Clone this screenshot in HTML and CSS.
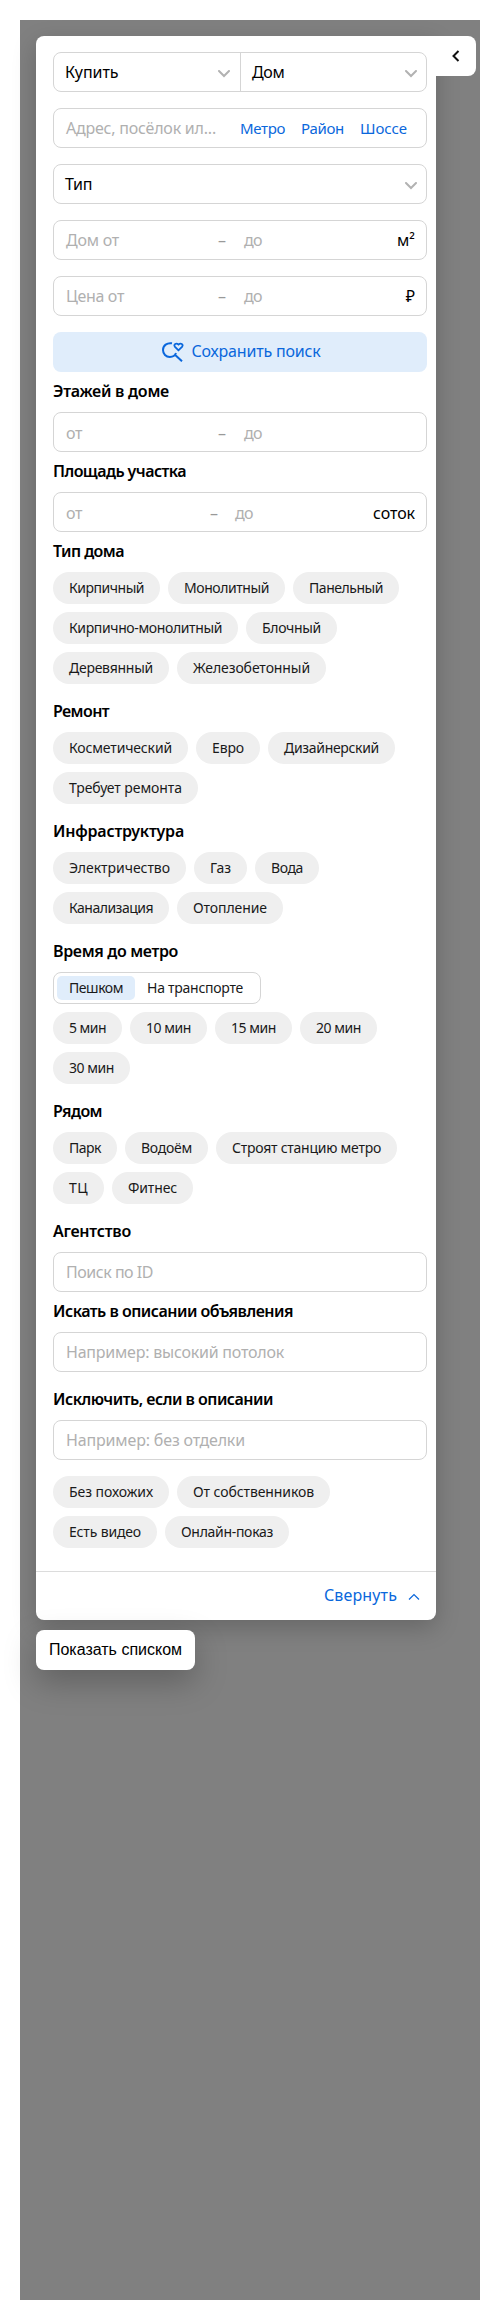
FILE: index.html
```html
<!DOCTYPE html>
<html lang="ru">
<head>
<meta charset="utf-8">
<title>Фильтры</title>
<link rel="stylesheet" href="styles.css">
</head>
<body>
<main class="map">
  <section class="panel">
    <button class="collapse" aria-label="Скрыть"><svg width="8" height="12" viewBox="0 0 8 12"><path d="M6.5 1 L1.5 6 L6.5 11"/></svg></button>
    <div class="filters">
      <div class="field split">
        <div class="select"><span data-w="53.5">Купить</span><svg class="chev" viewBox="0 0 12 8"><path d="M1 1 L6 6 L11 1"/></svg></div>
        <div class="select"><span data-w="32.5">Дом</span><svg class="chev" viewBox="0 0 12 8"><path d="M1 1 L6 6 L11 1"/></svg></div>
      </div>
      <div class="field address">
        <span class="hint" data-w="150">Адрес, посёлок ил...</span>
        <nav class="links"><a data-w="45">Метро</a><a data-w="43">Район</a><a data-w="47">Шоссе</a></nav>
      </div>
      <div class="field select"><span data-w="27">Тип</span><svg class="chev" viewBox="0 0 12 8"><path d="M1 1 L6 6 L11 1"/></svg></div>
      <div class="field range"><span class="hint from" data-w="53">Дом от</span><span class="dash">–</span><span class="hint" data-w="18">до</span><span class="unit" data-w="18">м²</span></div>
      <div class="field range"><span class="hint from" data-w="58">Цена от</span><span class="dash">–</span><span class="hint" data-w="18">до</span><span class="unit">₽</span></div>
      <button class="save"><svg width="22" height="20" viewBox="0 0 22 20"><path d="M10 1.300C5 .400 1 3.600 1 8c0 4 3 6.900 6.800 6.900 3.200 0 5.300-1.500 6.200-3.900M13.200 13.100l6.800 6.200"/><path class="heart" d="M16.500 8.300l-3.700-3.700c-1.300-2 1.200-4.100 3.700-2.100 2.500-2 5 .1 3.700 2.100z"/></svg><span data-w="129">Сохранить поиск</span></button>

      <h3><span data-w="116">Этажей в доме</span></h3>
      <div class="field range low"><span class="hint from" data-w="16">от</span><span class="dash">–</span><span class="hint" data-w="18">до</span></div>
      <h3><span data-w="133">Площадь участка</span></h3>
      <div class="field range low narrow"><span class="hint from" data-w="16">от</span><span class="dash">–</span><span class="hint" data-w="18">до</span><span class="unit" data-w="42">соток</span></div>

      <h3><span data-w="71">Тип дома</span></h3>
      <div class="chips">
        <span class="chip" data-w="75">Кирпичный</span><span class="chip" data-w="85">Монолитный</span><span class="chip" data-w="74">Панельный</span>
        <span class="chip" data-w="153">Кирпично-монолитный</span><span class="chip" data-w="59">Блочный</span>
        <span class="chip" data-w="84">Деревянный</span><span class="chip" data-w="117">Железобетонный</span>
      </div>
      <h3 class="apart"><span data-w="56">Ремонт</span></h3>
      <div class="chips">
        <span class="chip" data-w="103">Косметический</span><span class="chip" data-w="32">Евро</span><span class="chip" data-w="95">Дизайнерский</span>
        <span class="chip" data-w="113">Требует ремонта</span>
      </div>
      <h3 class="apart"><span data-w="131">Инфраструктура</span></h3>
      <div class="chips">
        <span class="chip" data-w="101">Электричество</span><span class="chip" data-w="21">Газ</span><span class="chip" data-w="32">Вода</span>
        <span class="chip" data-w="84">Канализация</span><span class="chip" data-w="74">Отопление</span>
      </div>
      <h3 class="apart"><span data-w="125">Время до метро</span></h3>
      <div class="segment"><span class="seg on"><b data-w="54">Пешком</b></span><span class="seg"><b data-w="96">На транспорте</b></span></div>
      <div class="chips">
        <span class="chip" data-w="37">5 мин</span><span class="chip" data-w="45">10 мин</span><span class="chip" data-w="45">15 мин</span><span class="chip" data-w="45">20 мин</span>
        <span class="chip" data-w="45">30 мин</span>
      </div>
      <h3 class="apart"><span data-w="49">Рядом</span></h3>
      <div class="chips">
        <span class="chip" data-w="32">Парк</span><span class="chip" data-w="51">Водоём</span><span class="chip" data-w="149">Строят станцию метро</span>
        <span class="chip" data-w="19">ТЦ</span><span class="chip" data-w="49">Фитнес</span>
      </div>
      <h3 class="apart"><span data-w="78">Агентство</span></h3>
      <div class="field"><span class="hint" data-w="87">Поиск по ID</span></div>
      <h3><span data-w="240">Искать в описании объявления</span></h3>
      <div class="field"><span class="hint" data-w="218">Например: высокий потолок</span></div>
      <h3 class="apart"><span data-w="220">Исключить, если в описании</span></h3>
      <div class="field"><span class="hint" data-w="179">Например: без отделки</span></div>
      <div class="chips extra">
        <span class="chip" data-w="84">Без похожих</span><span class="chip" data-w="121">От собственников</span>
        <span class="chip" data-w="72">Есть видео</span><span class="chip" data-w="92">Онлайн-показ</span>
      </div>
    </div>
    <footer class="footer"><span data-w="73">Свернуть</span><svg width="12" height="8" viewBox="0 0 12 8"><path d="M1 6.500 L6 1.500 L11 6.500"/></svg></footer>
  </section>
  <button class="list">Показать списком</button>
</main>
<script src="fit.js"></script>
</body>
</html>
```
FILE: styles.css
```css
* { box-sizing: border-box; }
body {
  margin: 0;
  padding: 20px 20px 0;
  background: #fff;
  color: #000;
  font: 16px/20px "Noto Sans", "Open Sans", sans-serif;
}
button { border: 0; margin: 0; font: inherit; }
svg { fill: none; flex: none; }
[data-w] { white-space: nowrap; }
.map { height: 2280px; padding: 16px; background: #808080; }
.panel {
  position: relative;
  width: 400px;
  height: 1584px;
  background: #fff;
  border-radius: 8px 0 8px 8px;
  box-shadow: 0 8px 24px rgba(0, 0, 0, .2);
  display: flex;
  flex-direction: column;
  justify-content: space-between;
}
.collapse {
  position: absolute;
  left: 400px;
  top: 0;
  width: 40px;
  height: 40px;
  padding: 0;
  background: #fff;
  border-radius: 0 8px 8px 0;
  display: flex;
  align-items: center;
  justify-content: center;
}
.collapse svg { stroke: #111; stroke-width: 2; }
.filters { width: 374px; margin: 16px 0 0 17px; display: flex; flex-direction: column; }
.field {
  height: 40px;
  border: 1px solid #d5d5d5;
  border-radius: 8px;
  padding: 0 12px 1px;
  display: flex;
  align-items: center;
}
.field + .field { margin-top: 16px; }
.field.split { padding: 0; }
.select { display: flex; align-items: center; justify-content: space-between; padding: 0 9px 1px 11px; }
.split .select { flex: 1; height: 38px; }
.split .select:first-child { border-right: 1px solid #d5d5d5; flex: 0 0 187px; padding-right: 10px; }
.chev { width: 12px; height: 8px; stroke: #b2b2b2; stroke-width: 2; stroke-linecap: round; margin-top: 4px; }
.hint { color: #b0b0b0; }
.address { justify-content: space-between; padding-right: 19px; }
.links { display: flex; gap: 16px; font-size: 15px; color: #0a67dc; }
.from { width: 152px; }
.narrow .from { width: 144px; }
.dash { width: 26px; color: #999; }
.narrow .dash { width: 25px; }
.field.range { padding-bottom: 0; }
.field.low { padding-top: 1px; }
.unit { margin-left: auto; margin-right: -1px; }
.save {
  height: 40px;
  margin-top: 16px;
  padding: 0 0 2px 2px;
  border-radius: 8px;
  background: #e0edfb;
  color: #0a67dc;
  display: flex;
  align-items: center;
  justify-content: center;
  gap: 8px;
}
.save svg { stroke: currentColor; stroke-width: 2; margin-top: 2px; }
.save .heart { stroke-width: 1.8; }
h3 { margin: 0; height: 40px; font-size: 16px; line-height: 38px; font-weight: 600; }
.apart { margin-top: 8px; }
.chips { display: flex; flex-wrap: wrap; gap: 8px; font-size: 14px; color: #1a1a1a; }
.chip { height: 32px; padding: 0 16px; border-radius: 16px; background: #efefef; line-height: 32px; }
.segment {
  width: 208px;
  height: 32px;
  margin-bottom: 8px;
  padding: 3px;
  border: 1px solid #d5d5d5;
  border-radius: 8px;
  display: flex;
  font-size: 14px;
  color: #1a1a1a;
}
.seg { padding: 0 12px; line-height: 24px; border-radius: 5px; }
.seg b { font-weight: 400; display: inline-block; }
.on { background: #e0edfb; }
.extra { margin-top: 16px; }
.footer {
  height: 49px;
  padding: 0 16px 3px 0;
  border-top: 1px solid #dcdcdc;
  color: #0a67dc;
  display: flex;
  align-items: center;
  justify-content: flex-end;
  gap: 11px;
}
.footer svg { stroke: currentColor; stroke-width: 1.2; margin-top: 4px; }
.list {
  display: block;
  position: relative;
  width: 159px;
  height: 40px;
  margin-top: 10px;
  padding: 0 0 1px;
  border-radius: 8px;
  background: #fff;
  color: #000;
  white-space: nowrap;
  font: 16px/20px "Liberation Sans", Arial, sans-serif;
  box-shadow: 0 12px 32px rgba(0, 0, 0, .25);
}
```
FILE: fit.js
```js
// Spaces the letters of each label so that the text fills its set width.
document.querySelectorAll('[data-w]').forEach(function (el) {
  var range = document.createRange();
  range.selectNodeContents(el);
  var natural = range.getBoundingClientRect().width;
  el.style.letterSpacing = (Number(el.dataset.w) - natural) / el.textContent.length + 'px';
});
```
